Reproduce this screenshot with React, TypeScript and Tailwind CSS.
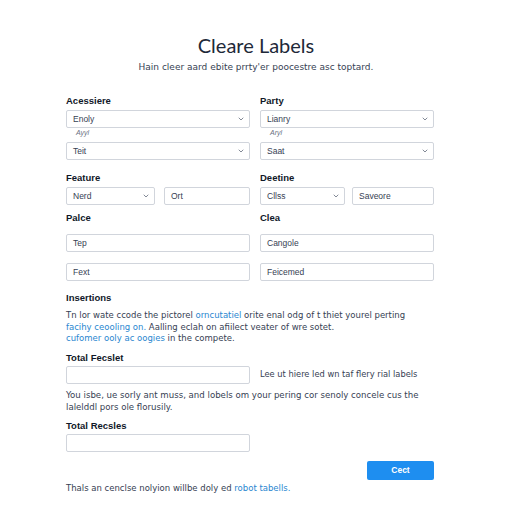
import { ChevronDown } from 'lucide-react';

const font = { fontFamily: '"Liberation Sans", Arial, sans-serif' };
const body = { fontFamily: '"DejaVu Sans", Verdana, sans-serif' };

function Select({ value, className }: { value: string; className: string }) {
  return (
    <div
      className={`flex h-[18px] items-center justify-between rounded-[2px] border border-gray-300 bg-white pl-[6px] pr-[4px] text-[8.5px] text-gray-700 ${className}`}
    >
      <span>{value}</span>
      <ChevronDown className="h-[8px] w-[8px] text-gray-500" strokeWidth={2.5} />
    </div>
  );
}

function Input({ value, className }: { value?: string; className: string }) {
  return (
    <div
      className={`flex h-[18px] items-center rounded-[2px] border border-gray-300 bg-white px-[6px] text-[8.5px] text-gray-700 ${className}`}
    >
      {value}
    </div>
  );
}

function Label({ children, className = '' }: { children: string; className?: string }) {
  return <div className={`text-[9.5px] font-bold leading-[12px] text-gray-900 ${className}`}>{children}</div>;
}

export default function App() {
  return (
    <div className="min-h-[512px] w-[512px] bg-white" style={font}>
      <div className="flex flex-col items-center pt-[33px]">
        <h1 className="text-[20px] font-normal leading-[24px] text-gray-800" style={{ fontFamily: 'Lato, "Noto Sans", sans-serif' }}>
          Cleare Labels
        </h1>
        <p className="mt-[3px] text-[9px] leading-[14px] text-gray-700" style={body}>
          Hain cleer aard ebite prrty'er poocestre asc toptard.
        </p>
      </div>

      <div className="ml-[66px] flex w-[368px] flex-col">
        <div className="mt-[21px] flex gap-[10px]">
          <div className="flex w-[184px] flex-col">
            <Label>Acessiere</Label>
            <Select value="Enoly" className="mt-[3px]" />
            <div className="pl-[10px] text-[7px] italic leading-[10px] text-gray-500">Ayyl</div>
            <Select value="Teit" className="mt-[4px]" />
          </div>
          <div className="flex w-[174px] flex-col">
            <Label>Party</Label>
            <Select value="Lianry" className="mt-[3px]" />
            <div className="pl-[10px] text-[7px] italic leading-[10px] text-gray-500">Aryl</div>
            <Select value="Saat" className="mt-[4px]" />
          </div>
        </div>

        <div className="mt-[12px] flex gap-[10px]">
          <div className="flex w-[184px] flex-col">
            <Label>Feature</Label>
            <div className="mt-[3px] flex gap-[9px]">
              <Select value="Nerd" className="w-[89px]" />
              <Input value="Ort" className="w-[86px]" />
            </div>
          </div>
          <div className="flex w-[174px] flex-col">
            <Label>Deetine</Label>
            <div className="mt-[3px] flex gap-[7px]">
              <Select value="Cllss" className="w-[85px]" />
              <Input value="Saveore" className="w-[82px]" />
            </div>
          </div>
        </div>

        <div className="mt-[7px] flex gap-[10px]">
          <div className="flex w-[184px] flex-col">
            <Label>Palce</Label>
            <Input value="Tep" className="mt-[10px]" />
            <Input value="Fext" className="mt-[11px]" />
          </div>
          <div className="flex w-[174px] flex-col">
            <Label>Clea</Label>
            <Input value="Cangole" className="mt-[10px]" />
            <Input value="Feicemed" className="mt-[11px]" />
          </div>
        </div>

        <Label className="mt-[11px]">Insertions</Label>
        <p className="mt-[6px] w-[400px] whitespace-nowrap text-[8.5px] leading-[11.5px] text-gray-700" style={body}>
          Tn lor wate ccode the pictorel <span className="text-[#2a87d0]">orncutatiel</span> orite enal odg of t thiet yourel perting
          <br />
          <span className="text-[#2a87d0]">facihy ceooling on.</span> Aalling eclah on afiilect veater of wre sotet.
          <br />
          <span className="text-[#2a87d0]">cufomer ooly ac oogies</span> in the compete.
        </p>

        <Label className="mt-[7px]">Total Fecslet</Label>
        <div className="mt-[2px] flex items-center gap-[10px]">
          <Input className="w-[184px]" />
          <span className="whitespace-nowrap text-[8.3px] text-gray-700" style={body}>
            Lee ut hiere led wn taf flery rial labels
          </span>
        </div>

        <p className="mt-[5px] w-[400px] whitespace-nowrap text-[8.6px] leading-[12px] text-gray-700" style={body}>
          You isbe, ue sorly ant muss, and lobels om your pering cor senoly concele cus the
          <br />
          lalelddl pors ole florusily.
        </p>

        <Label className="mt-[7px]">Total Recsles</Label>
        <Input className="mt-[2px] w-[184px]" />

        <button className="mt-[9px] flex h-[19px] w-[67px] items-center justify-center self-end rounded-[2px] bg-[#1e8ef0] text-[8.5px] font-bold text-white">
          Cect
        </button>

        <p className="mt-[2px] text-[8.5px] leading-[12px] text-gray-700" style={body}>
          Thals an cenclse nolyion willbe doly ed <span className="text-[#2a87d0]">robot tabells.</span>
        </p>
      </div>
    </div>
  );
}
